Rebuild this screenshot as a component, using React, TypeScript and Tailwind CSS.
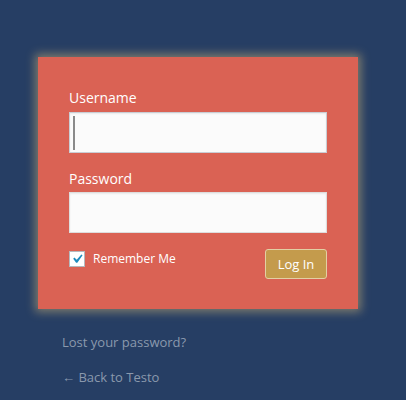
export default function App() {
  return (
    <div className="min-h-[400px] w-full bg-[#263e64] font-['Open_Sans',sans-serif] pt-[57px]">
      <div className="w-[320px] ml-[38px]">
        <form className="flex flex-col bg-[#da6254] px-[31px] pt-[30px] pb-[30px] shadow-[0_0_9px_3px_rgba(235,200,120,0.45)]">
          <label className="text-white text-[14px] leading-[21px]">Username</label>
          <div className="mt-[4px] h-[41px] flex items-center pl-[3px] bg-[#fbfbfb] border border-[#c9cdd4] shadow-[inset_0_1px_2px_rgba(0,0,0,0.07)]">
            <span className="w-[2px] h-[34px] bg-[#8a8a8a]"></span>
          </div>
          <label className="mt-[15px] text-white text-[14px] leading-[21px]">Password</label>
          <div className="mt-[3px] h-[41px] bg-[#fbfbfb] border border-[#dddddd] shadow-[inset_0_1px_2px_rgba(0,0,0,0.07)]"></div>
          <div className="mt-[16px] flex items-start justify-between">
            <div className="flex items-center gap-[8px] mt-[2px]">
              <span className="w-[16px] h-[16px] bg-white border border-[#b4b9be] flex items-center justify-center">
                <svg width="18" height="18" viewBox="0 0 20 20" className="shrink-0">
                  <path d="M14.83 4.89l1.34.94-5.81 8.38H9.02L5.78 9.67l1.34-1.25 2.57 2.4z" fill="#1e8cbe" />
                </svg>
              </span>
              <span className="text-white text-[12px] font-medium leading-[16px]">Remember Me</span>
            </div>
            <button type="button" className="h-[30px] w-[62px] rounded-[3px] bg-[#c49b4c] border border-[#e3cfa4] text-white text-[13px] leading-[28px]">Log In</button>
          </div>
        </form>
        <div className="px-[24px] mt-[24px] text-[13px] leading-[19px] text-[#8a99ad]">
          <p>Lost your password?</p>
          <p className="mt-[16px]">← Back to Testo</p>
        </div>
      </div>
    </div>
  );
}
